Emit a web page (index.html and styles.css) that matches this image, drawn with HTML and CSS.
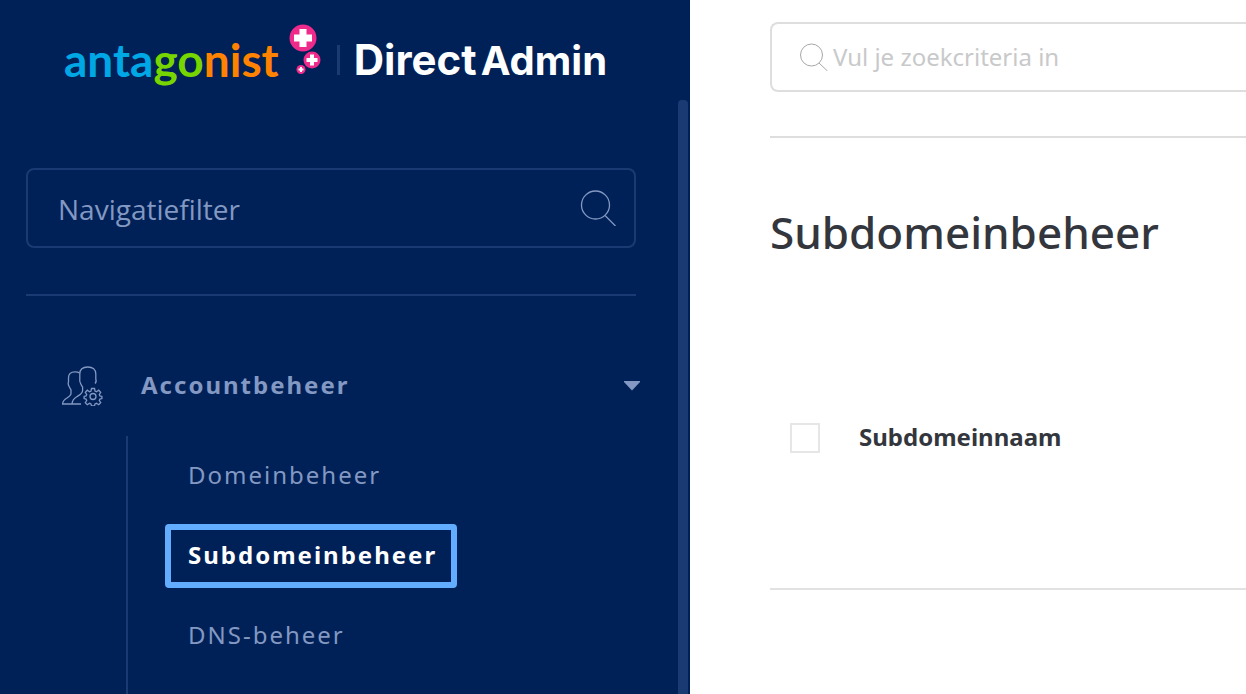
FILE: index.html
```html
<!DOCTYPE html>
<html lang="nl">
<head>
    <meta charset="UTF-8">
    <meta name="viewport" content="width=device-width, initial-scale=1.0">
    <title>Subdomeinbeheer</title>
    <link rel="stylesheet" href="styles.css">
</head>
<body>
    <aside class="sidebar">
        <header class="brand">
            <span class="wordmark"><span class="blue">anta</span><span class="green">go</span><span class="orange">nist</span></span>
            <svg class="plusses" width="32" height="52" viewBox="0 0 32 52" aria-hidden="true">
                <circle cx="14" cy="14" r="13.500" fill="#ee2a8b"/>
                <path d="M10.500 5h7v5.500H23v7h-5.500V23h-7v-5.500H5v-7h5.500z" fill="#fff"/>
                <circle cx="23" cy="36" r="8.500" fill="#ee2a8b"/>
                <path d="M21 30.500h4V34h3.500v4H25v3.500h-4V38h-3.500v-4H21z" fill="#fff"/>
                <circle cx="12" cy="45.500" r="4.500" fill="#ee2a8b"/>
                <path d="M11 43h2v1.500h1.500v2H13V48h-2v-1.500H9.500v-2H11z" fill="#fff"/>
            </svg>
            <span class="product"><span class="direct">Direct</span><span class="admin">Admin</span></span>
        </header>
        <div class="sidebar-body">
            <nav class="nav">
                <div class="nav-filter">
                    <input type="text" placeholder="Navigatiefilter" aria-label="Navigatiefilter">
                    <svg width="36" height="36" viewBox="0 0 36 36" fill="none" stroke="currentColor" stroke-width="1.300" aria-hidden="true">
                        <circle cx="15.500" cy="15" r="14"/>
                        <path d="M25 25.500L35.500 36"/>
                    </svg>
                </div>
                <hr>
                <button class="nav-group" type="button">
                    <svg width="42" height="40" viewBox="0 0 42 40" fill="none" stroke="currentColor" stroke-width="1.300" aria-hidden="true">
                        <path d="M33 17.500c1.200-1 1.300-3 .8-4.500V8c0-4.500-3-7-8-7s-8 2.500-8 7v5c-.5 2 0 3 .8 4.500.8 2 1.400 3 2 3.500v3.500c0 3-3 4.500-5.500 6-3.500 2-5 3.500-5 7.500"/>
                        <path d="M17.500 7c-1.200-1-2.800-1.200-4.500-1.200-4.500 0-6.500 2.200-6.500 6V16c-.7 1.500-.2 3 .6 4.500L9 24v3.500c0 2-2 3.200-4 4.500-2.800 1.700-4.400 3-4.400 6h18.400"/>
                        <circle cx="31" cy="30.500" r="3"/>
                        <path d="M29.500 22.500h3l.5 2.500 1.500.7 2.200-1.500 2 2.100-1.400 2.200.6 1.400 2 .6v2l-2 .6-.6 1.400 1.400 2.200-2 2-2.200-1.400-1.500.6-.5 2h-3l-.5-2-1.500-.6-2.200 1.400-2-2 1.400-2.200-.6-1.400-2-.6v-2l2-.6.6-1.400-1.400-2.200 2-2.100 2.200 1.500 1.500-.7z"/>
                    </svg>
                    <span class="nav-group-title">Accountbeheer</span>
                    <svg width="16" height="10" viewBox="0 0 16 10" aria-hidden="true"><path d="M0 0h16v1L8 9.500 0 1z" fill="currentColor"/></svg>
                </button>
                <ul class="nav-list">
                    <li><a href="#">Domeinbeheer</a></li>
                    <li><a href="#" class="active">Subdomeinbeheer</a></li>
                    <li><a href="#">DNS-beheer</a></li>
                </ul>
            </nav>
            <div class="scrollbar"></div>
        </div>
    </aside>
    <main class="content">
        <div class="search">
            <svg width="28" height="28" viewBox="0 0 28 28" fill="none" stroke="currentColor" stroke-width="1" aria-hidden="true">
                <circle cx="11.500" cy="12" r="11"/>
                <path d="M19 20L27.500 28"/>
            </svg>
            <input type="text" placeholder="Vul je zoekcriteria in" aria-label="Vul je zoekcriteria in">
        </div>
        <h1>Subdomeinbeheer</h1>
        <table class="domains">
            <thead>
                <tr>
                    <th class="check"><input type="checkbox" aria-label="Subdomeinnaam"></th>
                    <th>Subdomeinnaam</th>
                </tr>
            </thead>
        </table>
    </main>
</body>
</html>
```
FILE: styles.css
```css
* {
    box-sizing: border-box;
}
body {
    display: flex;
    min-height: 100vh;
    margin: 0;
    font-family: "Noto Sans", "Open Sans", sans-serif;
    background: #fff;
    color: #33373d;
    overflow: hidden;
}
input, button {
    font: inherit;
    color: inherit;
}

/* sidebar */
.sidebar {
    display: flex;
    flex-direction: column;
    flex: 0 0 690px;
    background: #002157;
    color: #8398c2;
}
.brand {
    display: flex;
    align-items: center;
    height: 100px;
    padding: 20px 64px 0;
    line-height: 60px;
}
.wordmark {
    font-family: Lato, sans-serif;
    font-size: 46px;
    font-weight: 700;
}
.blue {
    color: #00a7e5;
}
.green {
    color: #78d600;
}
.orange {
    color: #ff8200;
}
.plusses {
    margin: 0 0 20px 10px;
}
.product {
    display: flex;
    align-items: baseline;
    gap: 4px;
    margin-left: 16px;
    color: #fff;
    font-family: Inter, sans-serif;
    font-weight: 700;
}
.product::before {
    content: "";
    align-self: center;
    width: 3px;
    height: 30px;
    margin-right: 10px;
    background: #1a3a73;
}
.direct {
    font-size: 42px;
}
.admin {
    font-size: 40px;
}
.sidebar-body {
    display: flex;
    flex: 1;
    padding-right: 2px;
}
.scrollbar {
    width: 10px;
    border-radius: 4px 4px 0 0;
    background: #1a3a73;
}
.nav {
    display: flex;
    flex-direction: column;
    flex: 1;
    padding: 68px 38px 0 26px;
}
.nav-filter {
    display: flex;
    align-items: center;
    height: 80px;
    margin-right: 4px;
    padding: 0 18px 0 30px;
    border: 2px solid #1a3a73;
    border-radius: 8px;
}
.nav-filter input {
    flex: 1;
    min-width: 0;
    padding: 2px 0 0;
    border: none;
    background: none;
    font-family: "Open Sans", sans-serif;
    font-size: 28px;
}
input::placeholder {
    color: inherit;
    opacity: 1;
}
.nav hr {
    width: auto;
    margin: 46px 4px 0 0;
    border: none;
    border-top: 2px solid #1a3a73;
}
.nav-group {
    display: flex;
    align-items: center;
    padding: 66px 0 26px 36px;
    border: none;
    background: none;
    text-align: left;
    cursor: pointer;
}
.nav-group-title {
    flex: 1;
    margin-left: 37px;
    padding-bottom: 2px;
    font-size: 24px;
    font-weight: 700;
    line-height: 46px;
    letter-spacing: 2px;
}
.nav-list {
    display: flex;
    flex-direction: column;
    flex: 1;
    gap: 16px;
    margin: 0 0 0 100px;
    padding: 8px 0 0 37px;
    border-left: 2px solid #1a3a73;
    list-style: none;
}
.nav-list a {
    display: inline-block;
    padding: 0 14px 2px 17px;
    border: 6px solid transparent;
    border-radius: 4px;
    color: inherit;
    font-size: 24px;
    line-height: 50px;
    letter-spacing: 2px;
    text-decoration: none;
}
.nav-list .active {
    border-color: #62adff;
    color: #fff;
    font-weight: 700;
}

/* content */
.content {
    flex: 1;
    min-width: 0;
    padding: 22px 0 0 80px;
}
.search {
    display: flex;
    align-items: center;
    height: 70px;
    padding-left: 28px;
    border: 2px solid #dedede;
    border-right: none;
    border-radius: 8px 0 0 8px;
    color: #a5a7a9;
}
.search input {
    flex: 1;
    min-width: 0;
    padding: 0 0 2px 5px;
    border: none;
    background: none;
    color: #c8c9ca;
    font-size: 24px;
}
h1 {
    margin: 44px 0 0;
    padding-top: 62px;
    border-top: 2px solid #dedede;
    font-size: 44px;
    font-weight: 500;
    line-height: 64px;
}
.domains {
    width: 100%;
    margin-top: 24px;
    border-collapse: collapse;
}
.domains th {
    height: 301px;
    padding: 0 0 4px;
    border-bottom: 2px solid #e2e2e2;
    font-size: 24px;
    font-weight: 700;
    text-align: left;
}
.domains .check {
    width: 89px;
    padding: 0 0 0 20px;
}
.check input {
    display: block;
    width: 30px;
    height: 30px;
    margin: 0;
    border: 2px solid #e6e6e6;
    background: #fff;
    appearance: none;
}
```
